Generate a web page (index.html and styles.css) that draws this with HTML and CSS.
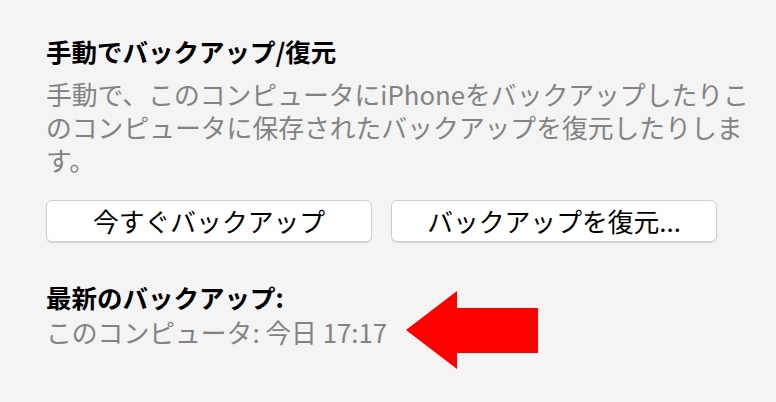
FILE: index.html
```html
<!DOCTYPE html>
<html lang="ja">
<head>
    <meta charset="UTF-8">
    <meta name="viewport" content="width=device-width, initial-scale=1.0">
    <title>バックアップ</title>
    <link rel="stylesheet" href="styles.css">
</head>
<body>

    <!-- Manual backup section -->
    <div class="panel">
        <h2 class="section-title">手動でバックアップ/復元</h2>
        <p class="section-desc">手動で、このコンピュータにiPhoneをバックアップしたりこのコンピュータに保存されたバックアップを復元したりします。</p>

        <div class="button-row">
            <button class="mac-button">今すぐバックアップ</button>
            <button class="mac-button">バックアップを復元...</button>
        </div>

        <!-- Latest backup -->
        <div class="latest">
            <div class="latest-info">
                <h3 class="latest-title">最新のバックアップ:</h3>
                <div class="latest-value">このコンピュータ: 今日 17:17</div>
            </div>
            <svg class="arrow" width="132" height="78" viewBox="0 0 132 78">
                <polygon points="0,39 51,0 51,17 132,17 132,62 51,62 51,78" fill="#ff0000"/>
            </svg>
        </div>
    </div>

</body>
</html>
```

FILE: styles.css
```css
body {
    margin: 0;
    background-color: #f4f4f4;
    font-family: "Noto Sans CJK JP", "Noto Sans", sans-serif;
}
.panel {
    padding: 36px 0 0 46px;
}
.section-title {
    margin: 0;
    font-size: 25.5px;
    line-height: 30px;
    font-weight: bold;
    color: #000;
}
.section-desc {
    margin: 11px 0 0 0;
    max-width: 712px;
    font-size: 25.8px;
    line-height: 33px;
    color: #838383;
}
.button-row {
    display: flex;
    gap: 19px;
    margin-top: 24px;
}
.mac-button {
    width: 326px;
    height: 42px;
    padding: 0;
    background-color: #fff;
    border: 1px solid #cfcfcf;
    border-radius: 6px;
    box-shadow: 0 1px 1px rgba(0, 0, 0, 0.12);
    font-family: inherit;
    font-size: 25.8px;
    line-height: 40px;
    color: #000;
}
.latest {
    display: flex;
    align-items: flex-start;
    margin-top: 40px;
}
.latest-title {
    margin: 0;
    font-size: 25.5px;
    line-height: 30px;
    font-weight: bold;
    color: #000;
}
.latest-value {
    margin-top: 5px;
    font-size: 25.8px;
    line-height: 30px;
    color: #838383;
}
.arrow {
    margin: 9px 0 0 19px;
}
```
